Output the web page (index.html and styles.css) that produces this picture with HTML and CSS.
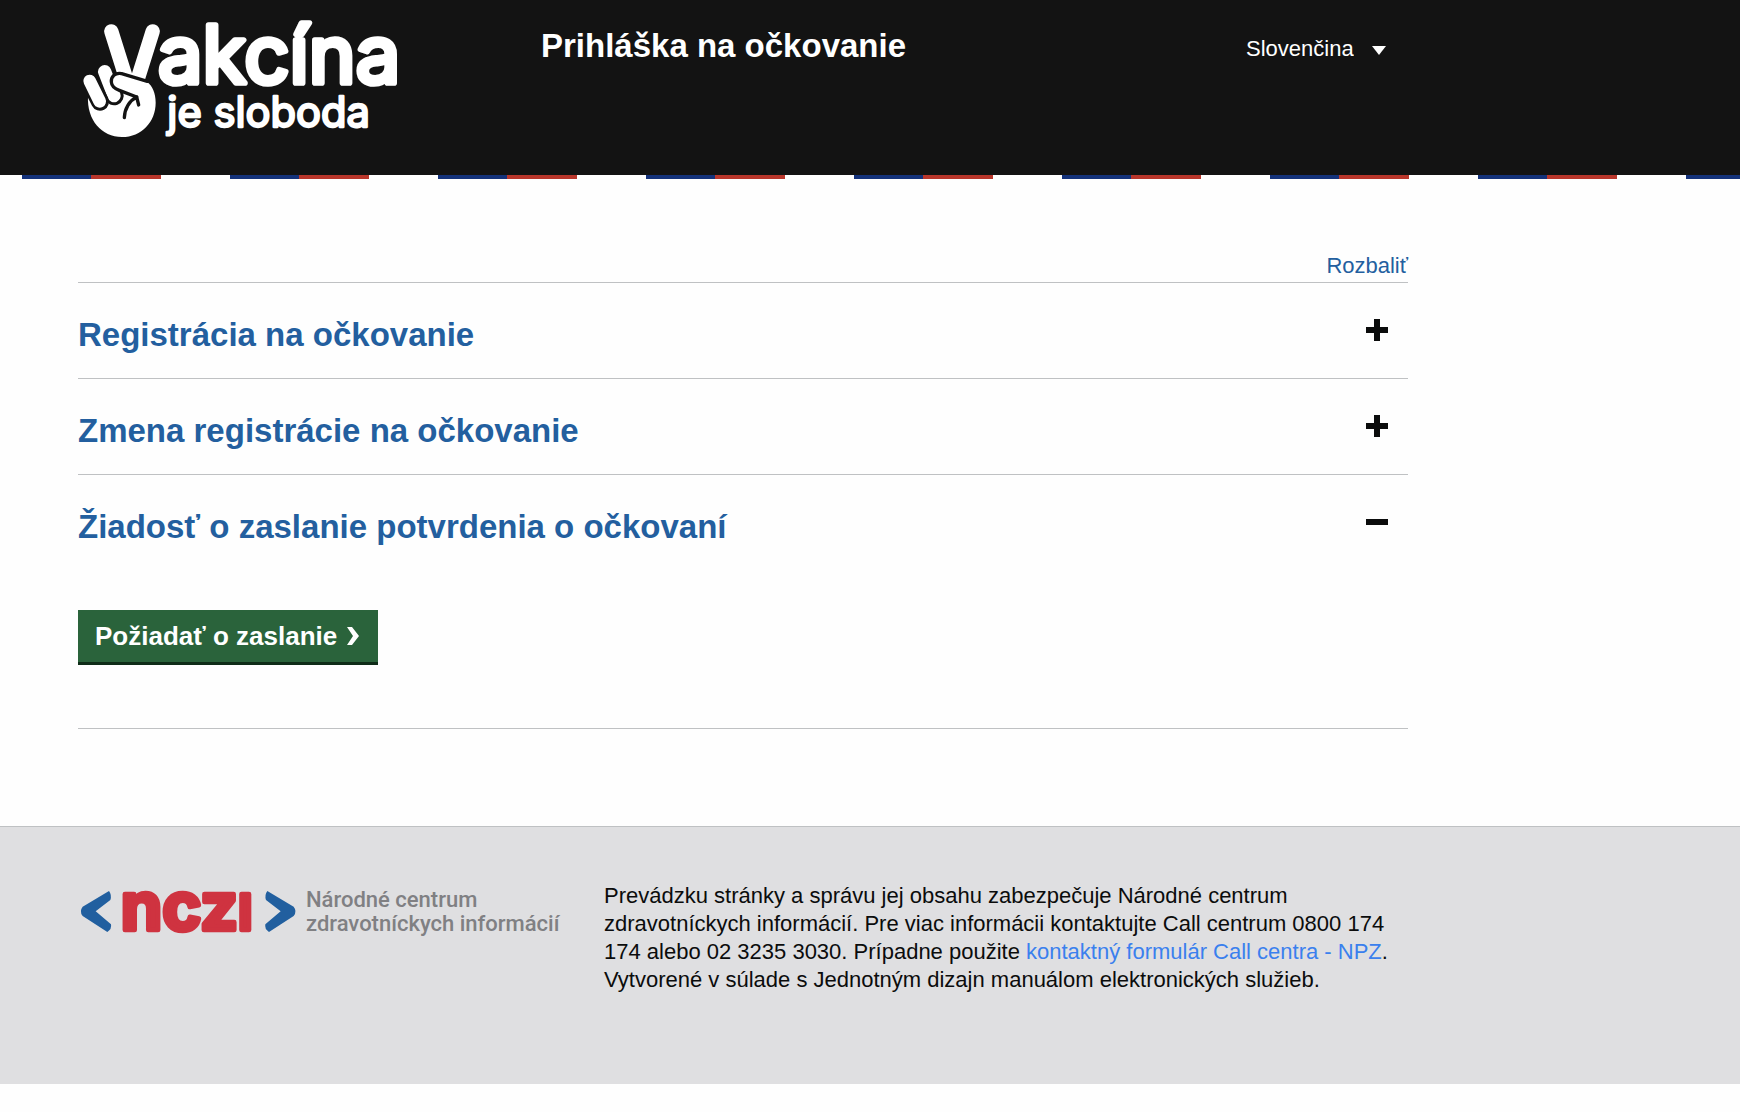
FILE: index.html
```html
<!DOCTYPE html>
<html lang="sk">
<head>
    <meta charset="UTF-8">
    <meta name="viewport" content="width=device-width, initial-scale=1.0">
    <title>Prihláška na očkovanie</title>
    <link rel="stylesheet" href="styles.css">
</head>
<body>
    <header class="header">
        <div class="container header-inner">
            <a class="logo" href="#" aria-label="Vakcína je sloboda">
                <svg class="logo-svg" viewBox="54 48 990 372" aria-hidden="true">
                    <!-- fingers -->
                    <g stroke="#fff" stroke-width="43" stroke-linecap="round" fill="none">
                        <path d="M154 94 L203 250"/>
                        <path d="M278 94 L229 250"/>
                    </g>
                    <!-- palm -->
                    <path fill="#fff" d="M84 288 C80 360 125 411 186 411 C245 411 287 365 287 308 C287 280 277 258 262 246 L180 225 L130 290 Z"/>
                    <!-- folded fingers -->
                    <g stroke-linecap="round" fill="none">
                        <path stroke="#131313" stroke-width="58" d="M134 216 L162 287"/>
                        <path stroke="#fff" stroke-width="40" d="M134 215 L162 287"/>
                        <path stroke="#131313" stroke-width="54" d="M90 246 L120 305"/>
                        <path stroke="#fff" stroke-width="38" d="M89 243 L119 304"/>
                    </g>
                    <!-- thumb -->
                    <path fill="#fff" d="M262 246 L185 221 C165 217 153 230 154 246 C155 260 166 267 178 271 L232 292 L275 290 Z"/>
                    <g stroke="#131313" stroke-width="10" fill="none" stroke-linecap="round" stroke-linejoin="round">
                        <path d="M262 244 L185 221 C165 217 153 230 154 246 C155 260 166 267 178 271 L230 291"/>
                        <path d="M236 315 L230 291 C208 302 194 326 193 353"/>
                    </g>
                    <text class="logo-big" x="294" y="250">akcína</text>
                    <text class="logo-small" x="322" y="380">je sloboda</text>
                </svg>
            </a>
            <h1 class="title">Prihláška na očkovanie</h1>
            <div class="language">
                <select class="language-select" aria-label="Jazyk">
                    <option>Slovenčina</option>
                </select>
                <svg class="language-arrow" viewBox="0 0 14 9" aria-hidden="true"><path d="M0 0 H14 L7 9 Z" fill="#fff"/></svg>
            </div>
        </div>
    </header>
    <div class="stripe"></div>

    <main class="container main">
        <div class="expand-row">
            <a class="expand-link" href="#">Rozbaliť</a>
        </div>

        <section class="item">
            <h2 class="item-heading">
                <button class="item-toggle" type="button" aria-expanded="false">
                    <span class="item-title">Registrácia na očkovanie</span>
                    <svg class="item-icon" viewBox="0 0 22 22" aria-hidden="true"><path d="M0 8 H8 V0 H14 V8 H22 V14 H14 V22 H8 V14 H0 Z"/></svg>
                </button>
            </h2>
        </section>

        <section class="item">
            <h2 class="item-heading">
                <button class="item-toggle" type="button" aria-expanded="false">
                    <span class="item-title">Zmena registrácie na očkovanie</span>
                    <svg class="item-icon" viewBox="0 0 22 22" aria-hidden="true"><path d="M0 8 H8 V0 H14 V8 H22 V14 H14 V22 H8 V14 H0 Z"/></svg>
                </button>
            </h2>
        </section>

        <section class="item">
            <h2 class="item-heading">
                <button class="item-toggle" type="button" aria-expanded="true">
                    <span class="item-title">Žiadosť o zaslanie potvrdenia o očkovaní</span>
                    <svg class="item-icon" viewBox="0 0 22 22" aria-hidden="true"><path d="M0 8 H22 V14 H0 Z"/></svg>
                </button>
            </h2>
            <div class="item-panel">
                <button class="btn" type="button">Požiadať o zaslanie
                    <svg class="btn-icon" viewBox="0 0 12 18" aria-hidden="true"><path d="M0 0 H5 L12 9 L5 18 H0 L6 9 Z" fill="#fff"/></svg>
                </button>
            </div>
        </section>
    </main>

    <footer class="footer">
        <div class="container footer-inner">
            <a class="footer-logo" href="#" aria-label="Národné centrum zdravotníckych informácií">
                <svg class="footer-svg" viewBox="54 231 1464 156" aria-hidden="true">
                    <path fill="#215f9f" d="M147 246 L68 293 Q57 307 68 321 L142 369 Q156 360 153 346 L107 307 L151 273 Q156 258 147 246 Z"/>
                    <path fill="#215f9f" d="M622 246 L701 293 Q712 307 701 321 L627 369 Q613 360 616 346 L662 307 L618 273 Q613 258 622 246 Z"/>
                    <text class="nczi" x="182" y="362">ncz<tspan class="nczi-cap">I</tspan></text>
                    <text class="nczi-name" x="738" y="294">Národné centrum</text>
                    <text class="nczi-name" x="738" y="366">zdravotníckych informácií</text>
                </svg>
            </a>
            <p class="footer-text">Prevádzku stránky a správu jej obsahu zabezpečuje Národné centrum zdravotníckych informácií. Pre viac informácii kontaktujte Call centrum 0800 174 174 alebo 02 3235 3030. Prípadne použite <a href="#">kontaktný formulár Call centra - NPZ</a>. Vytvorené v súlade s Jednotným dizajn manuálom elektronických služieb.</p>
        </div>
    </footer>
</body>
</html>
```
FILE: styles.css
```css
:root {
    --dark: #131313;
    --blue: #235f9f;
    --link: #3a80ee;
    --green: #2a633b;
    --line: #bfc1c3;
    --footer-bg: #dfdfe1;
}

* {
    box-sizing: border-box;
}

body {
    margin: 0;
    background-color: #fefefe;
    color: #0b0c0c;
    font-family: "Liberation Sans", Arial, sans-serif;
    font-size: 22px;
    line-height: 28px;
}

.container {
    max-width: 1330px;
    margin-left: 78px;
}

.header {
    background-color: var(--dark);
    color: #fff;
    padding: 16px 0 35px;
}

.header-inner {
    display: flex;
    align-items: flex-start;
}

.logo {
    flex: none;
    width: 463px;
}

.logo-svg {
    display: block;
    width: 330px;
    height: 124px;
    overflow: visible;
}

.logo-big,
.logo-small {
    fill: #fff;
    stroke: #fff;
    stroke-linejoin: round;
    font-family: Inter, sans-serif;
    font-weight: 400;
}

.logo-big {
    font-size: 238px;
    stroke-width: 17px;
}

.logo-small {
    font-size: 125px;
    stroke-width: 7px;
}

.title {
    margin: 10px 0 0;
    font-size: 33px;
    line-height: 40px;
}

.language {
    position: relative;
    margin: 19px 20px 0 auto;
}

.language-select {
    appearance: none;
    display: block;
    border: none;
    padding: 0 34px 0 0;
    background: none;
    color: #fff;
    font: inherit;
    cursor: pointer;
}

.language-arrow {
    position: absolute;
    right: 2px;
    top: 11px;
    width: 14px;
    height: 9px;
    pointer-events: none;
}

.stripe {
    height: 4px;
    background-image: linear-gradient(to right, #14327a 33%, #b9362b 33%, #b9362b 67%, #fff 67%);
    background-size: 208px 4px;
    background-position: 22px 0;
}

.main {
    padding: 73px 0 97px;
}

.expand-row {
    text-align: right;
    padding: 0 0 2px;
    border-bottom: 1px solid var(--line);
}

.expand-link {
    color: var(--blue);
    text-decoration: none;
}

.item {
    border-bottom: 1px solid var(--line);
}

.item-heading {
    margin: 0;
    font-size: 33px;
}

.item-toggle {
    display: flex;
    justify-content: space-between;
    align-items: flex-start;
    width: 100%;
    padding: 32px 20px 23px 0;
    border: none;
    background: none;
    color: var(--blue);
    font: inherit;
    line-height: 40px;
    text-align: left;
    cursor: pointer;
}

.item-icon {
    flex: none;
    width: 22px;
    height: 22px;
    margin-top: 4px;
    fill: #0b0c0c;
}

.item-panel {
    padding: 40px 0 63px;
}

.btn {
    display: flex;
    align-items: center;
    gap: 10px;
    padding: 12px 19px 12px 17px;
    border: none;
    border-bottom: 3px solid #0f2c18;
    background-color: var(--green);
    color: #fff;
    font: inherit;
    font-size: 26px;
    font-weight: 700;
    cursor: pointer;
}

.btn-icon {
    width: 12px;
    height: 18px;
}

.footer {
    border-top: 1px solid var(--line);
    background-color: var(--footer-bg);
    padding: 55px 0 90px;
}

.footer-inner {
    display: flex;
    align-items: flex-start;
}

.footer-logo {
    flex: none;
    width: 526px;
    padding-top: 4px;
}

.footer-svg {
    display: block;
    width: 488px;
    height: 52px;
    overflow: visible;
}

.nczi {
    fill: #cf3340;
    stroke: #cf3340;
    stroke-width: 14px;
    stroke-linejoin: round;
    font-family: Inter, sans-serif;
    font-weight: 700;
    font-size: 200px;
}

.nczi-cap {
    font-size: 150px;
}

.nczi-name {
    fill: #808083;
    font-family: Roboto, sans-serif;
    font-weight: 500;
    font-size: 66px;
}

.footer-text {
    margin: 0;
}

.footer-text a {
    color: var(--link);
    text-decoration: none;
}
```
